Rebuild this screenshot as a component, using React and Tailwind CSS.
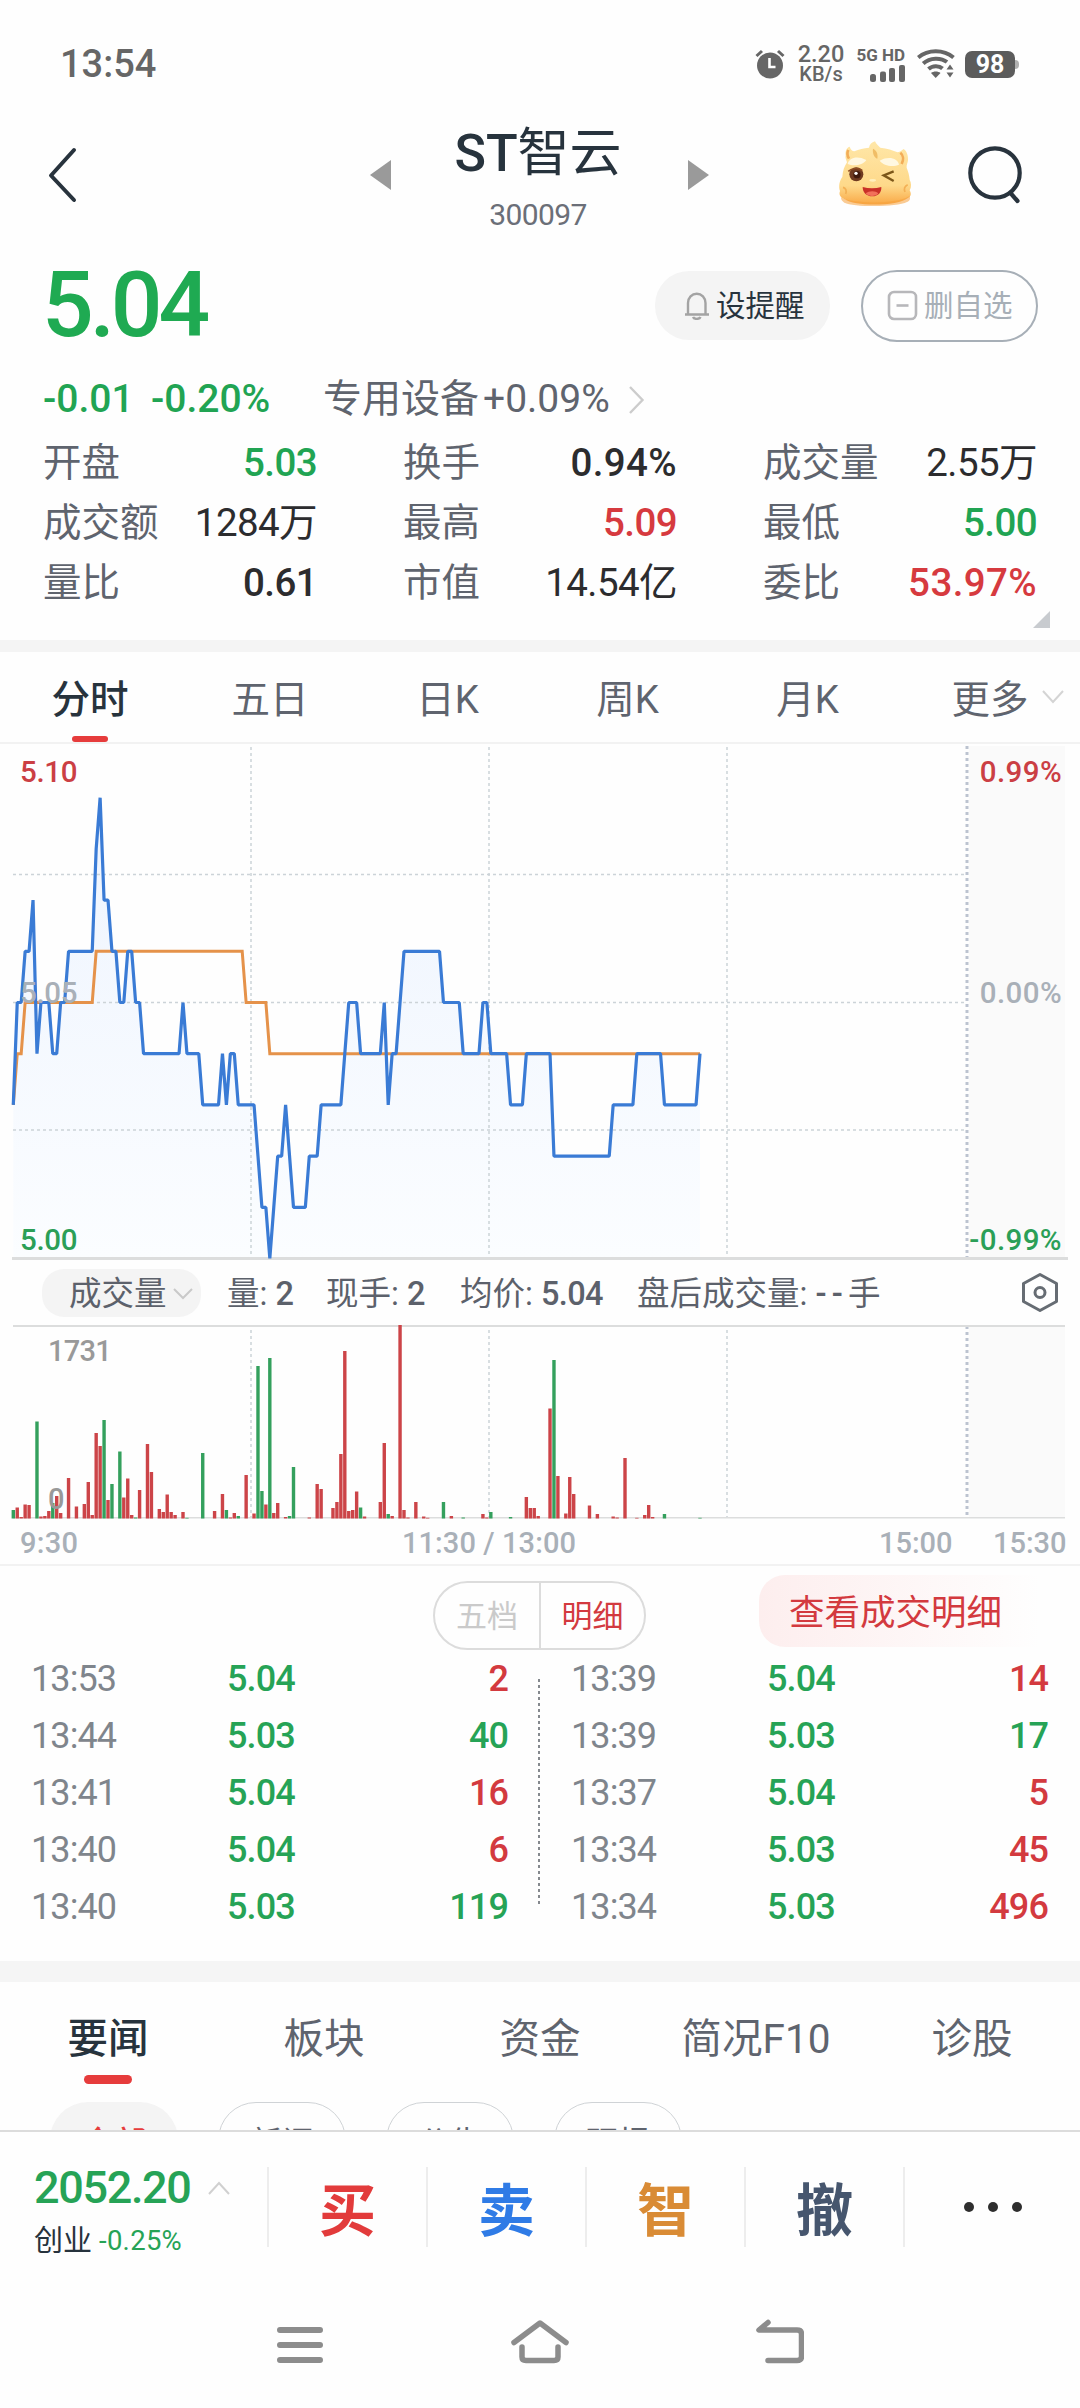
import React from 'react';
import clsx from 'clsx';

const quotes = [
  { label: '开盘', value: '5.03', color: 'text-[#21a453]' },
  { label: '换手', value: '0.94%', color: 'text-[#2c2c2e]' },
  { label: '成交量', value: '2.55万', color: 'text-[#2c2c2e]' },
  { label: '成交额', value: '1284万', color: 'text-[#2c2c2e]' },
  { label: '最高', value: '5.09', color: 'text-[#d63a3f]' },
  { label: '最低', value: '5.00', color: 'text-[#21a453]' },
  { label: '量比', value: '0.61', color: 'text-[#2c2c2e]' },
  { label: '市值', value: '14.54亿', color: 'text-[#2c2c2e]' },
  { label: '委比', value: '53.97%', color: 'text-[#d63a3f]' },
];

const periods = ['分时', '五日', '日K', '周K', '月K', '更多'];
const sections = ['要闻', '板块', '资金', '简况F10', '诊股'];
const filters = ['全部', '新闻', '公告', '研报'];

const actions = [
  { label: '买', color: 'text-[#e23b3b]' },
  { label: '卖', color: 'text-[#2f7be6]' },
  { label: '智', color: 'text-[#d98b35]' },
  { label: '撤', color: 'text-[#46566e]' },
];

// [time, price, volume, direction]
const trades = [
  [
    ['13:53', '5.04', '2', 'up'],
    ['13:44', '5.03', '40', 'down'],
    ['13:41', '5.04', '16', 'up'],
    ['13:40', '5.04', '6', 'up'],
    ['13:40', '5.03', '119', 'down'],
  ],
  [
    ['13:39', '5.04', '14', 'up'],
    ['13:39', '5.03', '17', 'down'],
    ['13:37', '5.04', '5', 'up'],
    ['13:34', '5.03', '45', 'up'],
    ['13:34', '5.03', '496', 'up'],
  ],
];

// [minute since open, cents above 5.00]
const priceSeries = [
  [0, 3], [1, 5], [2, 5], [3, 6], [4, 6], [5, 7], [6, 4], [7, 5], [9, 5], [10, 4], [11, 4],
  [12, 5], [13, 5], [14, 6], [20, 6], [21, 8], [22, 9], [23, 7], [24, 7], [25, 6], [26, 6],
  [27, 5], [28, 5], [29, 6], [30, 6], [31, 5], [32, 5], [33, 4], [42, 4], [43, 5], [44, 4],
  [47, 4], [48, 3], [52, 3], [53, 4], [54, 3], [55, 4], [56, 4], [57, 3], [61, 3], [62, 2],
  [63, 1], [64, 1], [65, 0], [66, 1], [67, 2], [68, 2], [69, 3], [70, 2], [71, 1], [74, 1],
  [75, 2], [77, 2], [78, 3], [83, 3], [84, 4], [85, 5], [87, 5], [88, 4], [93, 4], [94, 5],
  [95, 3], [96, 4], [97, 4], [98, 5], [99, 6], [108, 6], [109, 5], [113, 5], [114, 4],
  [118, 4], [119, 5], [120, 5], [121, 4], [125, 4], [126, 3], [129, 3], [130, 4], [136, 4],
  [137, 2], [151, 2], [152, 3], [157, 3], [158, 4], [164, 4], [165, 3], [173, 3], [174, 4],
];

const averageSeries = [
  [0, 3], [1, 4], [2, 4], [3, 5], [20, 5], [21, 6], [58, 6], [59, 5], [64, 5], [65, 4], [174, 4],
];

// [minute, bar height]
const upBars = [
  [1, 11], [2, 1.5], [3, 14], [4, 13.5], [7, 2], [8, 2.5], [9, 7.5], [11, 22.5], [12, 5.5],
  [14, 40.5], [16, 12], [18, 14.5], [19, 36.5], [20, 3.5], [21, 85.5], [22, 72.5], [24, 18.5],
  [28, 21], [29, 40], [30, 3.5], [32, 28.5], [34, 74.5], [35, 46.5], [37, 9.5], [38, 6.5],
  [39, 24], [40, 6.5], [41, 3.5], [43, 6.5], [51, 7.5], [53, 24.5], [55, 1], [56, 5.5],
  [59, 43.5], [61, 5], [64, 14], [66, 5.5], [67, 15.5], [69, 1.5], [75, 1], [77, 34.5],
  [78, 29.5], [81, 10.5], [82, 16.5], [83, 64.5], [84, 167.5], [85, 7.5], [86, 8.5], [87, 27],
  [89, 2], [93, 16.5], [94, 75.5], [96, 2.5], [98, 193.5], [99, 8.5], [100, 1], [102, 16.5],
  [104, 2], [105, 0.7], [111, 2.5], [119, 4.5], [120, 1], [130, 21.5], [131, 10.5], [132, 10.5],
  [133, 2.5], [136, 110], [138, 42.5], [140, 5], [141, 41.5], [142, 24.5], [146, 13],
  [148, 4.5], [152, 2], [153, 1], [155, 60.5], [158, 0.7], [160, 3.5], [161, 13.5], [162, 1.5],
];

const downBars = [
  [0, 8.5], [6, 97], [10, 15.5], [23, 98.5], [25, 34.5], [27, 67], [31, 1], [44, 0.7],
  [48, 65.5], [54, 8.5], [57, 2.5], [62, 152.5], [63, 27.5], [65, 160.5], [70, 2.5], [71, 51.5],
  [88, 11], [95, 4.5], [109, 16.5], [114, 1], [121, 6.5], [126, 1.5], [137, 158.5], [165, 4.5],
  [174, 0.7],
];

const STEP = 3.9465;
const minuteX = (m) => 13.3 + m * STEP;
const priceY = (c) => 514.5 - c * 51.2;
const toPoints = (series) => series.map(([m, c]) => `${minuteX(m)},${priceY(c)}`).join(' ');

const StatusBar = () => (
  <div className="flex h-[128px] items-center pl-[60px] pr-[61px] text-[#666]">
    <span className="text-[38px] font-medium leading-none">13:54</span>
    <div className="ml-auto flex items-center">
      <svg width="30" height="30" viewBox="0 0 30 30">
        <circle cx="15" cy="16.5" r="13" fill="#666" />
        <path d="M1.5 7 7 2M28.500 7 23 2" stroke="#666" strokeWidth="3" />
        <path d="M14.500 9v9h6" stroke="#fff" strokeWidth="2.600" fill="none" />
      </svg>
      <div className="ml-[12px] flex w-[48px] flex-col items-center font-medium">
        <span className="text-[23.5px] leading-[20px]">2.20</span>
        <span className="text-[20px] leading-[20px]">KB/s</span>
      </div>
      <div className="ml-[10px] flex w-[50px] flex-col items-end">
        <span className="whitespace-nowrap text-[17px] font-bold leading-[17px]">5G HD</span>
        <svg width="36" height="17" viewBox="0 0 36 17" className="mt-[1px]" fill="#666">
          <rect x="1" y="9" width="6" height="8" rx="2.500" />
          <rect x="11" y="6.500" width="6" height="10.500" rx="2" />
          <rect x="20" y="3" width="6" height="14" rx="2" />
          <rect x="30" y="0" width="6" height="17" rx="2" />
        </svg>
      </div>
      <svg width="38" height="30" viewBox="0 0 38 30" className="ml-[12px]" fill="none" stroke="#666" strokeWidth="4">
        <path d="M1.200 8.500C11 .2 26.500 .2 36.500 8.500" />
        <path d="M6.200 14.500C13 8.300 24 8.300 30 13" />
        <path d="M11.500 20C15.500 16.300 22 16.300 25.500 19.500" />
        <path d="M14 24c2.500-2 7-2 9.500 0l-4.800 5z" fill="#666" stroke="none" />
        <path d="M29.500 20.500 33 15.500l3.500 5zM29.500 23.500h7L33 28.500z" fill="#666" stroke="none" />
      </svg>
      <div className="ml-[10px] flex h-[27px] w-[50px] items-center justify-center rounded-[7px] bg-[#5c5c5c] text-[25px] font-bold leading-none text-white">
        98
      </div>
      <div className="h-[9px] w-[4px] rounded-r-full bg-[#b0b0b0]" />
    </div>
  </div>
);

const DragonFace = () => (
  <svg width="74" height="68" viewBox="297 328 222 204">
    <defs>
      <linearGradient id="dragonSkin" x1="0" y1="0" x2="0" y2="1">
        <stop offset="0" stopColor="#ffe7a8" />
        <stop offset="0.700" stopColor="#fed98a" />
        <stop offset="1" stopColor="#f9a845" />
      </linearGradient>
    </defs>
    <path
      d="M320 374c-2-14 4-24 12-26 2 8 8 14 14 14 14-6 28-9 44-11 2-10 8-16 18-19 4 8 10 14 16 19 20 2 38 8 52 14 8-2 12-6 18-10 10 6 14 22 13 34-1 8-5 14-4 22 4 10 8 22 9 36 5 10 6 22 0 32 7 12 2 20-4 22-30 26-160 28-192 4-10-4-18-12-13-24-5-14-2-30 7-42 1-18 6-32 14-44-3-8-6-14-4-21z"
      fill="url(#dragonSkin)"
    />
    <path d="M306 500c30 20 170 22 206-4 4 10-2 16-8 18-30 16-160 16-188 2-6-4-10-8-10-16z" fill="#f6a03c" opacity="0.550" />
    <path d="M484 366c10 8 10 22 4 34M328 358c-4 8-3 18 2 26" stroke="#f3ad58" strokeWidth="8" fill="none" />
    <path d="M402 354c9 4 16 14 13 30-10-4-15-16-13-30z" fill="#f0bd66" />
    <path d="M326 400c4-20 30-26 56-12-10 16-38 20-56 12zM422 390c26-14 54-8 58 12-18 8-46 4-58-12z" fill="#fff8e2" />
    <circle cx="352" cy="431" r="21" fill="#6f3a20" />
    <circle cx="354" cy="432" r="11" fill="#40190d" />
    <circle cx="351" cy="428" r="5" fill="#fff" />
    <path d="M328 422c10-10 32-12 42-2" stroke="#8e4d23" strokeWidth="5" fill="none" />
    <path d="M464 422l-30 12 30 17" stroke="#7c5719" strokeWidth="7" fill="none" />
    <ellipse cx="401" cy="449" rx="10" ry="4" fill="#fff0bf" />
    <path d="M371 469c18 5 38 5 56 0 1 16-9 28-27 28-18 0-29-12-29-28z" fill="#c93028" />
    <path d="M380 488c10-8 30-8 38 0-8 11-30 11-38 0z" fill="#f2705a" />
    <path d="M312 470c8 2 12 10 8 20M506 462c-8 4-12 12-8 22" stroke="#f3b055" strokeWidth="5" fill="none" />
  </svg>
);

const Header = () => (
  <div className="flex h-[122px] items-start">
    <svg width="30" height="58" viewBox="0 0 30 58" className="ml-[47px] mt-[18px]">
      <path d="M27 4 4 29.500 27 54" fill="none" stroke="#28333d" strokeWidth="4" strokeLinecap="round" strokeLinejoin="round" />
    </svg>
    <svg width="22" height="32" viewBox="0 0 22 32" className="ml-[292px] mt-[31px]">
      <path d="M22 1v30L1 16z" fill="#9a9a9a" />
    </svg>
    <div className="flex w-[294px] flex-col items-center">
      <h1 className="mt-[-4px] whitespace-nowrap text-[52px] font-medium leading-[60px] text-[#27333d]">
        ST<span className="font-normal">智云</span>
      </h1>
      <span className="mt-[14px] text-[30px] leading-[34px] tracking-[-0.02em] text-[#6b6f78]">300097</span>
    </div>
    <svg width="22" height="32" viewBox="0 0 22 32" className="ml-[2px] mt-[31px]">
      <path d="M1 1v30l21-15z" fill="#9a9a9a" />
    </svg>
    <div className="ml-[129px] mt-[12px]">
      <DragonFace />
    </div>
    <svg width="60" height="60" viewBox="0 0 60 60" className="ml-[55px] mt-[17px]">
      <circle cx="28" cy="28" r="24.700" fill="none" stroke="#28333d" strokeWidth="4.200" />
      <path d="m43.500 48 7 8" stroke="#28333d" strokeWidth="4.200" strokeLinecap="round" />
    </svg>
  </div>
);

const Summary = () => (
  <div className="h-[390px]">
    <div className="flex h-[111px] items-center pl-[42px] pr-[42px]">
      <span className="text-[91px] font-medium leading-none tracking-[-0.045em] text-[#1faa52]">5.04</span>
      <div className="ml-auto flex items-center gap-[31px]">
        <div className="flex h-[69px] w-[175px] items-center rounded-[34px] bg-[#f4f4f4] pl-[29px]">
          <svg width="26" height="28" viewBox="0 0 26 28" fill="none" stroke="#a3a3a3" strokeWidth="2.400">
            <path d="M4 21.500V11a8.500 9 0 0 1 17.500 0v10.500M1 22.500h24M9 25c1 2.500 6.500 2.500 7.500 0" />
          </svg>
          <span className="ml-[6px] pt-[3px] text-[29.5px] leading-none text-[#27333d]">设提醒</span>
        </div>
        <div className="flex h-[72px] w-[177px] items-center rounded-full border-2 border-[#a7afb7] pl-[24px]">
          <svg width="31" height="31" viewBox="0 0 31 31" fill="none" stroke="#b7b7ba" strokeWidth="2.600">
            <rect x="2" y="2" width="27" height="27" rx="5" />
            <path d="M9.500 15.500h12" />
          </svg>
          <span className="ml-[6px] pt-[3px] text-[29.5px] leading-none text-[#a7afb7]">删自选</span>
        </div>
      </div>
    </div>

    <div className="flex h-[72px] items-center pl-[43px] pt-[5px] text-[39px] leading-none">
      <span className="w-[108px] font-medium text-[#21a453]">-0.01</span>
      <span className="w-[172px] font-medium text-[#21a453]">-0.20%</span>
      <span className="text-[#5f646e]">专用设备</span>
      <span className="ml-[4px] text-[#5f646e]">+0.09%</span>
      <svg width="18" height="30" viewBox="0 0 18 30" className="ml-[18px]">
        <path d="M2 2l12.500 13L2 28" fill="none" stroke="#ccc" strokeWidth="2.400" />
      </svg>
    </div>

    <div className="grid grid-cols-3 gap-x-[86px] pl-[43px] pr-[43px]">
      {quotes.map((q) => (
        <div key={q.label} className="flex h-[60px] items-center justify-between whitespace-nowrap pt-[1px] text-[38.5px] leading-none">
          <span className="text-[#5f646e]">{q.label}</span>
          <span
            className={clsx(
              q.color,
              q.value.endsWith('%') ? 'tracking-[0.01em]' : 'tracking-[-0.015em]',
              /[万亿]/.test(q.value) ? 'font-normal' : 'font-medium'
            )}
          >
            {q.value}
          </span>
        </div>
      ))}
    </div>
    <svg width="17" height="17" viewBox="0 0 17 17" className="ml-[1033px] mt-[-2px]">
      <path d="M17 0v17H0z" fill="#c8cbcf" />
    </svg>
  </div>
);

const PeriodTabs = () => (
  <div className="grid h-[92px] grid-cols-6 border-b-2 border-[#f2f2f2]">
    {periods.map((name, i) => (
      <div key={name} className="relative flex flex-col items-center">
        <span
          className={clsx(
            'mt-[18px] text-[38.5px] leading-[60px]',
            i === 0 ? 'font-medium text-[#27333d]' : 'text-[#5f646e]',
            name.endsWith('K') && 'pr-[5px]'
          )}
        >
          {name}
        </span>
        {i === 0 && <div className="mt-[6px] h-[6px] w-[36px] rounded-full bg-[#e63c3c]" />}
        {name === '更多' && (
          <svg width="24" height="16" viewBox="0 0 24 16" className="absolute left-[141px] top-[37px]">
            <path d="M2 2l10 11L22 2" fill="none" stroke="#d4d4d4" strokeWidth="2" />
          </svg>
        )}
      </div>
    ))}
  </div>
);

const PriceChart = () => (
  <svg width="1080" height="518" viewBox="0 0 1080 518" className="block">
    <defs>
      <linearGradient id="priceArea" x1="0" y1="0" x2="0" y2="1">
        <stop offset="0" stopColor="#eef4fe" />
        <stop offset="1" stopColor="#fbfdff" />
      </linearGradient>
    </defs>
    <rect x="969" y="2" width="96" height="512" fill="#fafafa" />
    <polygon points={`13.300,514 ${toPoints(priceSeries)} ${minuteX(174)},514`} fill="url(#priceArea)" />
    <g stroke="#ccd3d8" strokeWidth="1.500" strokeDasharray="3 3">
      {[130.6, 258.6, 386].map((y) => (
        <line key={y} x1="13" x2="967" y1={y} y2={y} />
      ))}
      {[251, 489, 727].map((x) => (
        <line key={x} x1={x} x2={x} y1="3" y2="512" />
      ))}
    </g>
    <line x1="967" x2="967" y1="2" y2="514" stroke="#bcc3d0" strokeWidth="3" strokeDasharray="3 3" />
    <rect x="12" y="513" width="1056" height="3" fill="#dcdddd" />
    <polyline points={toPoints(averageSeries)} fill="none" stroke="#e5924a" strokeWidth="3" />
    <polyline points={toPoints(priceSeries)} fill="none" stroke="#3a7bd5" strokeWidth="3.200" strokeLinejoin="bevel" />
    <g fontSize="29.500" fontWeight="500" letterSpacing="-0.3">
      <text x="20" y="38" fill="#cb3f44">5.10</text>
      <text x="20" y="259" fill="#a9b0b8">5.05</text>
      <text x="20" y="506" fill="#2b9f57">5.00</text>
      <g textAnchor="end" letterSpacing="0.4">
        <text x="1062" y="38" fill="#cb3f44">0.99%</text>
        <text x="1062" y="259" fill="#a9b0b8">0.00%</text>
        <text x="1062" y="506" fill="#2b9f57">-0.99%</text>
      </g>
    </g>
  </svg>
);

const IndicatorRow = () => (
  <div className="flex h-[62px] items-center whitespace-pre pl-[42px] pr-[21px] text-[32.5px] leading-none text-[#5c616b]">
    <div className="flex h-[48px] w-[159px] items-center rounded-[22px] bg-[#f4f4f4] pl-[27px] pt-[2px]">
      成交量
      <svg width="22" height="14" viewBox="0 0 22 14" className="ml-[5px]">
        <path d="M2 2l9 9 9-9" fill="none" stroke="#c9c9c9" strokeWidth="2" />
      </svg>
    </div>
    <div className="ml-[26px] w-[99px] pt-[2px]">量: <b className="font-medium">2</b></div>
    <div className="w-[134px] pt-[2px]">现手: <b className="font-medium">2</b></div>
    <div className="w-[177px] pt-[2px]">均价: <b className="font-medium tracking-[-0.02em]">5.04</b></div>
    <div className="pt-[2px]">盘后成交量: <b className="font-medium tracking-[0.160em]">--</b>手</div>
    <svg width="38" height="42" viewBox="0 0 38 42" className="ml-auto" fill="none" stroke="#666c73">
      <path d="M19 2.500 35.500 11.500v18L19 38.500 2.500 29.500v-18z" strokeWidth="3" strokeLinejoin="round" />
      <circle cx="19" cy="20.500" r="5" strokeWidth="3" />
    </svg>
  </div>
);

const Bars = ({ data, fill }) => (
  <g fill={fill}>
    {data.map(([m, h]) => (
      <rect key={m} x={minuteX(m) - 1.7} y={194.5 - h} width="3.400" height={h} />
    ))}
  </g>
);

const VolumeChart = () => (
  <svg width="1080" height="240" viewBox="0 0 1080 240" className="block">
    <rect x="969" y="2" width="96" height="192" fill="#fafafa" />
    <g stroke="#ccd3d8" strokeWidth="1.500" strokeDasharray="3 3">
      {[251, 489, 727].map((x) => (
        <line key={x} x1={x} x2={x} y1="6" y2="193" />
      ))}
    </g>
    <line x1="967" x2="967" y1="2" y2="194" stroke="#bcc3d0" strokeWidth="3" strokeDasharray="3 3" />
    <rect x="13" y="1" width="1052" height="2" fill="#dcdddd" />
    <rect x="13" y="193" width="1052" height="1.500" fill="#dcdddd" />
    <Bars data={upBars} fill="#cc4448" />
    <Bars data={downBars} fill="#34a05d" />
    <g fontSize="29" fontWeight="500">
      <g fill="#999" letterSpacing="-0.7">
        <text x="48" y="37">1731</text>
        <text x="48" y="185">0</text>
      </g>
      <g fill="#a9b0b8">
        <text x="20" y="229" letterSpacing="0.3">9:30</text>
        <text x="489" y="229" textAnchor="middle" letterSpacing="0.1">11:30 / 13:00</text>
        <text x="879" y="229">15:00</text>
        <text x="993" y="229">15:30</text>
      </g>
    </g>
  </svg>
);

const TradeColumn = ({ rows }) => (
  <div className="w-[540px] pl-[31px] pr-[32px]">
    {rows.map(([time, price, volume, side], i) => (
      <div key={i} className="flex h-[57px] items-center text-[36px] font-medium leading-none tracking-[-0.025em]">
        <span className="w-[196px] font-normal text-[#7f858c]">{time}</span>
        <span className="text-[#26a356]">{price}</span>
        <span className={clsx('ml-auto', side === 'up' ? 'text-[#d33a3f]' : 'text-[#26a356]')}>{volume}</span>
      </div>
    ))}
  </div>
);

const TradeDetails = () => (
  <div className="h-[395px] border-t-2 border-[#f2f2f2]">
    <div className="flex h-[84px] items-start">
      <div className="ml-[433px] mt-[15px] flex h-[69px] w-[213px] items-center rounded-full border-2 border-[#dcdcdc] text-[31px] leading-none">
        <span className="flex h-full w-[106px] items-center justify-center border-r-2 border-[#dcdcdc] pt-[2px] text-[#cacaca]">五档</span>
        <span className="flex-1 pt-[2px] text-center text-[#d33a3f]">明细</span>
      </div>
      <div className="ml-[113px] mt-[9px] flex h-[72px] w-[281px] items-center rounded-l-[26px] bg-gradient-to-r from-[#fdeeee] to-[#fefefe] pl-[30px] pt-[5px] text-[35.5px] leading-none text-[#d33a3f]">
        查看成交明细
      </div>
    </div>
    <div className="relative flex">
      <TradeColumn rows={trades[0]} />
      <TradeColumn rows={trades[1]} />
      <svg width="2" height="226" viewBox="0 0 2 226" className="absolute left-[538px] top-[29px]">
        <line x1="1" x2="1" y1="0" y2="226" stroke="#85898e" strokeWidth="2" strokeDasharray="3 3" />
      </svg>
    </div>
  </div>
);

const NewsSection = () => (
  <div className="h-[148px] overflow-hidden">
    <div className="grid h-[120px] grid-cols-5">
      {sections.map((name, i) => (
        <div key={name} className="flex flex-col items-center">
          <span
            className={clsx(
              'mt-[27px] text-[40.5px] leading-[60px]',
              i === 0 ? 'font-medium text-[#27333d]' : 'text-[#5f646e]'
            )}
          >
            {name}
          </span>
          {i === 0 && <div className="mt-[6px] h-[9px] w-[48px] rounded-full bg-[#e63c3c]" />}
        </div>
      ))}
    </div>
    <div className="flex gap-[40px] pl-[50px]">
      {filters.map((name, i) => (
        <div
          key={name}
          className={clsx(
            'flex h-[76px] w-[128px] items-center justify-center rounded-full pt-[6px] text-[32px] leading-none',
            i === 0 ? 'bg-[#f4f4f4] font-medium text-[#e63c3c]' : 'border border-[#cfd3d6] text-[#5f646e]'
          )}
        >
          {name}
        </div>
      ))}
    </div>
  </div>
);

const TradeBar = () => (
  <div className="flex h-[154px] items-start border-t-2 border-[#dcdcdc] pt-[35px]">
    <div className="w-[267px] pl-[34px]">
      <div className="flex items-center">
        <span className="text-[45px] font-medium leading-[42px] tracking-[-0.03em] text-[#26a356]">2052.20</span>
        <svg width="24" height="15" viewBox="0 0 24 15" className="ml-[16px]">
          <path d="M2 13 12 2l10 11" fill="none" stroke="#d0d0d0" strokeWidth="2" />
        </svg>
      </div>
      <div className="mt-[14px] flex items-center text-[29px] leading-[36px] text-[#27333d]">
        创业
        <span className="ml-[7px] text-[27.5px] tracking-[0.01em] text-[#26a356]">-0.25%</span>
      </div>
    </div>
    {actions.map((a) => (
      <div
        key={a.label}
        className={clsx('flex h-[80px] w-[159px] items-center justify-center border-l-2 border-[#ededed] pt-[9px] text-[57px] font-bold leading-none', a.color)}
      >
        {a.label}
      </div>
    ))}
    <div className="flex h-[80px] flex-1 items-center justify-center gap-[14px] border-l-2 border-[#ededed]">
      <i className="size-[10px] rounded-full bg-[#2e2e2e]" />
      <i className="size-[10px] rounded-full bg-[#2e2e2e]" />
      <i className="size-[10px] rounded-full bg-[#2e2e2e]" />
    </div>
  </div>
);

const SystemNav = () => (
  <div className="flex h-[124px] items-start pl-[276px] pt-[34px]">
    <svg width="48" height="46" viewBox="0 0 48 46" stroke="#8c8c8c" strokeWidth="6" strokeLinecap="round">
      <path d="M4 12h40M4 27h40M4 42h40" />
    </svg>
    <svg width="60" height="46" viewBox="0 0 60 46" className="ml-[186px]" fill="none" stroke="#8c8c8c" strokeWidth="5.500" strokeLinecap="round" strokeLinejoin="round">
      <path d="M4 24.500 30 5l26 19.500" />
      <path d="M12 29v10q0 3.500 4 3.500h28q4 0 4-3.500V29" />
    </svg>
    <svg width="50" height="46" viewBox="0 0 50 46" className="ml-[184px]" fill="none" stroke="#8c8c8c" strokeWidth="5.500" strokeLinecap="round" strokeLinejoin="round">
      <path d="M14 4.500 5 12h38q4.500 0 4.500 4v22.500q0 4-4.500 4H14" />
    </svg>
  </div>
);

const App = () => {
  return (
    <div className="h-[2408px] w-[1080px] overflow-hidden bg-[#fefefe] font-['Roboto','Noto_Sans_CJK_SC',sans-serif]">
      <StatusBar />
      <Header />
      <Summary />
      <div className="h-[12px] bg-[#f4f4f4]" />
      <PeriodTabs />
      <PriceChart />
      <IndicatorRow />
      <VolumeChart />
      <TradeDetails />
      <div className="mt-[2px] h-[21px] bg-[#f5f5f5]" />
      <NewsSection />
      <TradeBar />
      <SystemNav />
    </div>
  );
};

export default App;
